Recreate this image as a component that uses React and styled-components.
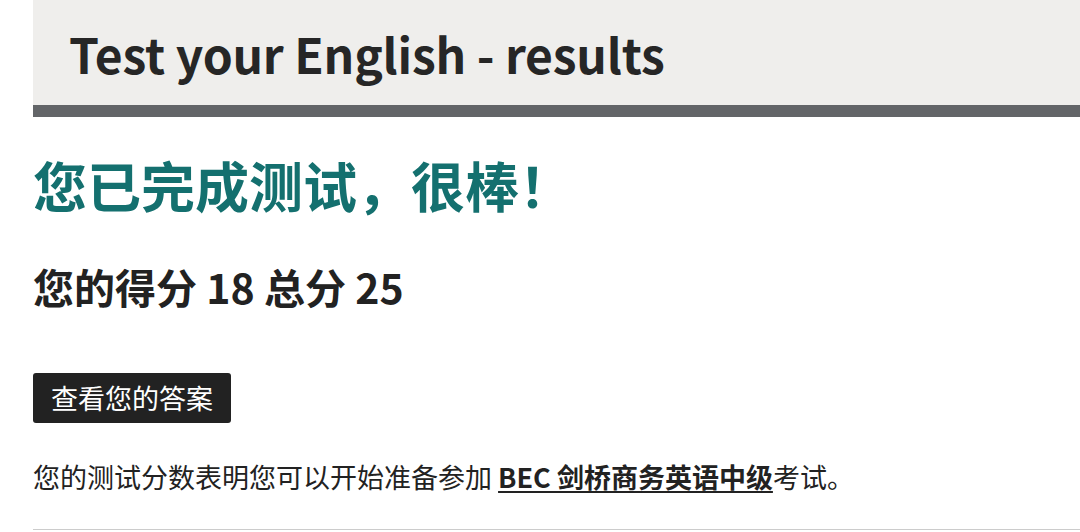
import React from 'react'
import styled, { createGlobalStyle } from 'styled-components'

const GlobalStyle = createGlobalStyle`
  html, body {
    margin: 0;
    padding: 0;
    background: #ffffff;
  }
  body {
    font-family: "Noto Sans CJK SC", "Noto Sans", sans-serif;
    color: #222222;
  }
`

const Page = styled.main`
  padding-left: 33px;
  overflow: hidden;
  height: 532px;
`

const Header = styled.header`
  background-color: #efeeec;
  border-bottom: 12px solid #636568;
  height: 105px;
  display: flex;
  align-items: center;
  padding-left: 36px;
`

const PageTitle = styled.h1`
  margin: 0;
  font-size: 48px;
  font-weight: 700;
  line-height: 1;
  color: #262626;
  letter-spacing: -0.2px;
`

const Content = styled.section`
  display: flex;
  flex-direction: column;
  align-items: flex-start;
`

const Congrats = styled.h2`
  margin: 36px 0 0 0;
  font-size: 54px;
  font-weight: 700;
  line-height: 1.2;
  color: #14706f;
`

const Score = styled.h3`
  margin: 44px 0 0 0;
  font-size: 41px;
  font-weight: 700;
  line-height: 1.2;
  color: #222222;
`

const AnswersButton = styled.button`
  margin-top: 62px;
  background: #222222;
  color: #ffffff;
  border: none;
  border-radius: 3px;
  font-family: inherit;
  font-size: 27px;
  line-height: 1;
  padding: 11px 18px 12px;
  cursor: pointer;
`

const Note = styled.p`
  margin: 36px 0 0 0;
  font-size: 27px;
  line-height: 1.3;
  color: #222222;
`

const ExamLink = styled.a`
  font-weight: 700;
  color: #222222;
  text-decoration: underline;
  text-underline-offset: 3px;
`

const Divider = styled.hr`
  align-self: stretch;
  margin: 35px 0 0 0;
  border: none;
  border-top: 1px solid #cccccc;
`

export default function App() {
  return (
    <Page>
      <GlobalStyle />
      <Header>
        <PageTitle>Test your English - results</PageTitle>
      </Header>
      <Content>
        <Congrats>您已完成测试，很棒！</Congrats>
        <Score>您的得分 18 总分 25</Score>
        <AnswersButton>查看您的答案</AnswersButton>
        <Note>
          您的测试分数表明您可以开始准备参加 <ExamLink href="#">BEC 剑桥商务英语中级</ExamLink>考试。
        </Note>
        <Divider />
      </Content>
    </Page>
  )
}
